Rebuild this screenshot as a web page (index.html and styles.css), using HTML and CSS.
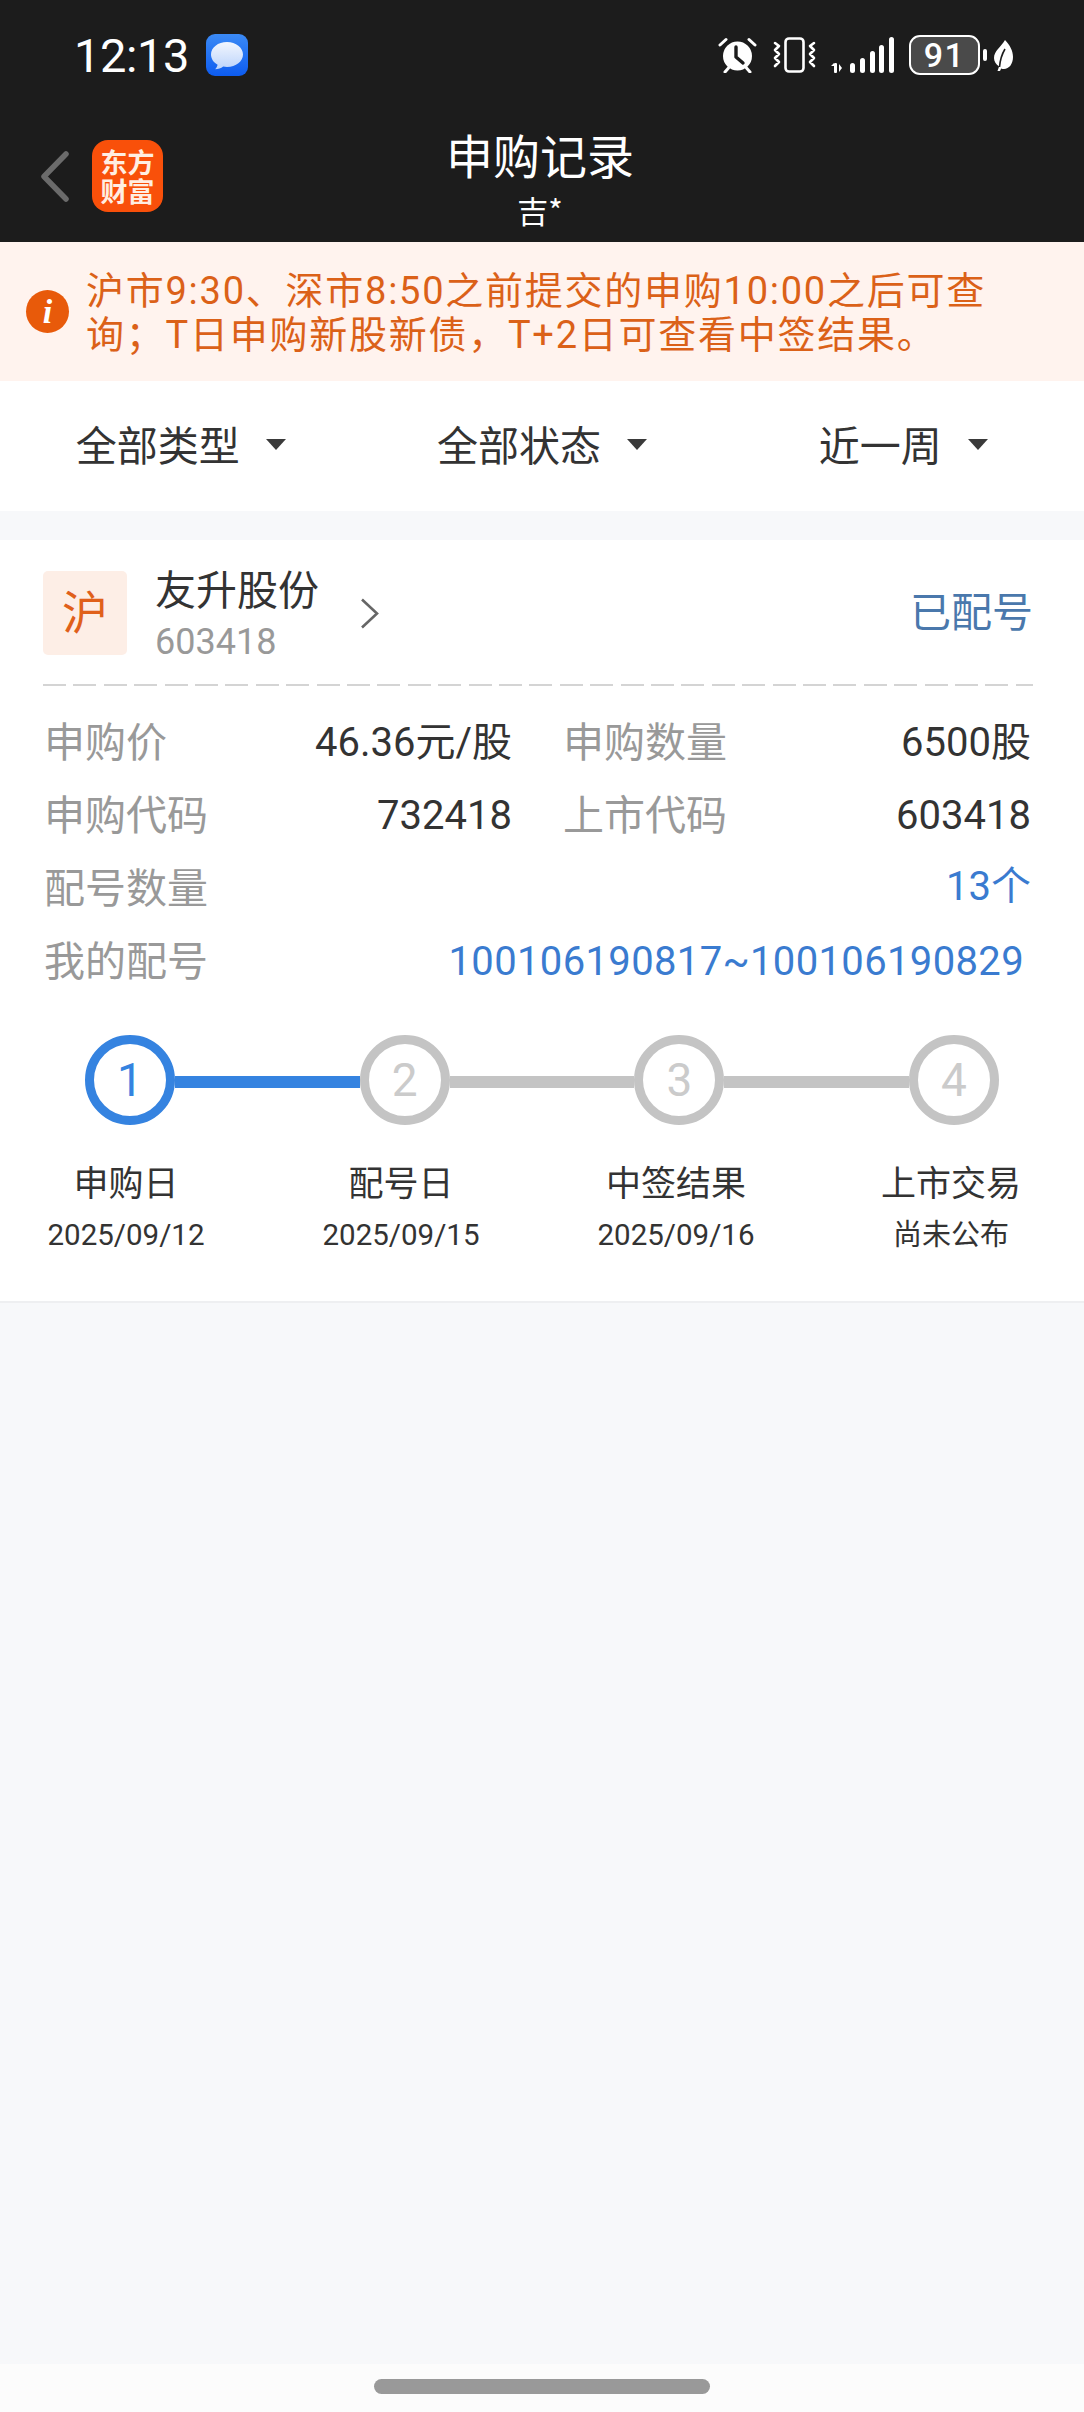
FILE: index.html
```html
<!DOCTYPE html>
<html lang="zh-CN">
<head>
<meta charset="utf-8">
<title>申购记录</title>
<link rel="stylesheet" href="styles.css">
</head>
<body>
<div class="page">
  <header class="topbar">
    <div class="status">
      <span class="clock">12:13</span>
      <svg class="msg" viewBox="0 0 42 42" width="42" height="42">
        <defs><linearGradient id="mg" x1="0" y1="0" x2="0" y2="1"><stop offset="0" stop-color="#3b8af5"/><stop offset="1" stop-color="#0d5cf0"/></linearGradient>
        <linearGradient id="bb" x1="0" y1="0" x2="0" y2="1"><stop offset="0" stop-color="#f2f6fe"/><stop offset="1" stop-color="#bcd4fb"/></linearGradient></defs>
        <rect width="42" height="42" rx="9" fill="url(#mg)"/>
        <path d="M21 8C12 8 5 13.500 5 20.500c0 4.300 2.600 8 6.600 10.200-.4 1.700-1.300 3.300-2.400 4.500 3 0 5.800-1 8-2.700 1.200.3 2.500.4 3.800.4 9 0 16-5.500 16-12.400S30 8 21 8z" fill="url(#bb)"/>
      </svg>
      <div class="sys">
        <svg class="alarm" viewBox="0 0 39 36" width="39" height="36">
          <circle cx="19.500" cy="19" r="14.500" fill="#fff"/>
          <path d="M18 10v10l7 6" stroke="#1c1c1c" stroke-width="3.400" fill="none" stroke-linecap="round" stroke-linejoin="round"/>
          <path d="M2 8l6-5.500M37 8l-6-5.500M7 35l3.500-4M32 35l-3.500-4" stroke="#fff" stroke-width="3" stroke-linecap="round" fill="none"/>
        </svg>
        <svg viewBox="0 0 43 36" width="43" height="36">
          <rect x="12.500" y="1.500" width="18" height="33" rx="3.500" stroke="#fff" stroke-width="2.600" fill="none"/>
          <path d="M2 6l4 3-4 4 4 4-4 4 4 4-4 4M41 6l-4 3 4 4-4 4 4 4-4 4 4 4" stroke="#fff" stroke-width="2.600" fill="none" stroke-linecap="round" stroke-linejoin="round"/>
        </svg>
        <svg viewBox="0 0 63 36" width="63" height="36" fill="#fff">
          <rect x="3" y="26" width="3" height="10" rx="1"/>
          <path d="M0 29l3-3v3zM8 27l3 4-3 4z"/>
          <rect x="19" y="26" width="5" height="10" rx="2.500"/>
          <rect x="29" y="21" width="5" height="15" rx="2.500"/>
          <rect x="39" y="14" width="5" height="22" rx="2.500"/>
          <rect x="48" y="8" width="5" height="28" rx="2.500"/>
          <rect x="58" y="0" width="5" height="36" rx="2.500"/>
        </svg>
        <div class="battery-group">
          <div class="battery"><span class="battery-level">91</span></div>
          <span class="battery-tip"></span>
          <svg class="leaf" viewBox="0 0 19 31" width="19" height="31">
            <path d="M11 0c5 5 8 11 8 17 0 7-4 12-9 12-1 0-2-.2-2.800-.6L6 31H3.500l1.600-4.500C2 24.500 0 21.500 0 18 0 11 7 7 11 0z" fill="#fff"/>
            <path d="M11 9C8 14 6 21 5.500 27" stroke="#1c1c1c" stroke-width="1.600" fill="none"/>
          </svg>
        </div>
      </div>
    </div>
    <nav class="nav">
      <div class="nav-left">
        <svg class="back" viewBox="0 0 29 51" width="29" height="51"><path d="M26 3L4 25.500 26 48" stroke="#6b6b6b" stroke-width="5.500" fill="none" stroke-linecap="round" stroke-linejoin="round"/></svg>
        <div class="logo"><span class="logo-text">东方财富</span></div>
      </div>
      <div class="nav-title">
        <div class="title">申购记录</div>
        <div class="subtitle">吉*</div>
      </div>
    </nav>
  </header>

  <section class="notice">
    <span class="notice-icon">i</span>
    <p class="notice-text">沪市9:30、深市8:50之前提交的申购10:00之后可查询；T日申购新股新债，T+2日可查看中签结果。</p>
  </section>

  <section class="filters">
    <div class="filter"><span>全部类型</span><i class="caret"></i></div>
    <div class="filter"><span>全部状态</span><i class="caret"></i></div>
    <div class="filter"><span>近一周</span><i class="caret"></i></div>
  </section>

  <main class="content">
    <article class="card">
      <div class="card-head">
        <div class="market">沪</div>
        <div class="stock">
          <div class="stock-name">友升股份</div>
          <div class="stock-code">603418</div>
        </div>
        <svg class="more" viewBox="0 0 19 31" width="19" height="31"><path d="M2 1.500L17 15.500 2 29.500" stroke="#666" stroke-width="2.600" fill="none"/></svg>
        <div class="state">已配号</div>
      </div>
      <div class="dash"></div>
      <div class="info">
        <div class="info-pair"><span class="label">申购价</span><span class="value">46.36元/股</span></div>
        <div class="info-pair"><span class="label">申购数量</span><span class="value">6500股</span></div>
        <div class="info-pair"><span class="label">申购代码</span><span class="value">732418</span></div>
        <div class="info-pair"><span class="label">上市代码</span><span class="value">603418</span></div>
        <div class="info-pair wide"><span class="label">配号数量</span><span class="value link lift">13个</span></div>
        <div class="info-pair wide"><span class="label">我的配号</span><span class="value link inset">100106190817~100106190829</span></div>
      </div>
      <div class="track">
        <span class="node active">1</span><span class="bar active"></span>
        <span class="node">2</span><span class="bar"></span>
        <span class="node">3</span><span class="bar"></span>
        <span class="node">4</span>
      </div>
      <div class="steps">
        <div class="step"><div class="step-name">申购日</div><div class="step-date">2025/09/12</div></div>
        <div class="step"><div class="step-name">配号日</div><div class="step-date">2025/09/15</div></div>
        <div class="step"><div class="step-name">中签结果</div><div class="step-date">2025/09/16</div></div>
        <div class="step"><div class="step-name">上市交易</div><div class="step-date small">尚未公布</div></div>
      </div>
    </article>
  </main>

  <footer class="home"><span class="home-bar"></span></footer>
</div>
</body>
</html>
```

FILE: styles.css
```css
* { box-sizing: border-box; }
html, body { margin: 0; padding: 0; }
body {
  font-family: Roboto, "Noto Sans CJK SC", sans-serif;
  background: #f7f8fa;
  color: #333;
}
.page {
  width: 1084px;
  height: 2412px;
  display: flex;
  flex-direction: column;
  overflow: hidden;
}

/* top bar */
.topbar { background: #1c1c1c; height: 242px; color: #fff; flex: none; }
.status {
  height: 110px;
  display: flex;
  align-items: center;
  padding: 0 71px 0 74px;
}
.clock { font-size: 47px; letter-spacing: -.4px; line-height: 1; }
.msg { margin-left: 17px; }
.sys { margin-left: auto; display: flex; align-items: center; gap: 15px; }
.alarm { margin-right: 1px; }
.battery-group { display: flex; align-items: center; margin-left: 0; }
.battery {
  width: 71px;
  height: 40px;
  border: 2.5px solid #fff;
  border-radius: 11px;
  background: #4a4a4a;
  background-clip: padding-box;
  display: flex;
  align-items: center;
  justify-content: center;
}
.battery-level { font-size: 34px; font-weight: 500; line-height: 1; letter-spacing: 1.5px; }
.battery-tip { width: 4px; height: 12px; background: #fff; border-radius: 2px; margin-left: 3px; }
.leaf { margin-left: 7px; }

.nav {
  height: 132px;
  position: relative;
  display: flex;
  justify-content: center;
  padding-right: 4px;
}
.nav-left {
  position: absolute;
  left: 40px;
  top: 30px;
  display: flex;
  align-items: center;
  gap: 23px;
}
.logo {
  width: 71px;
  height: 72px;
  background: #f9500a;
  border-radius: 16px;
  display: flex;
  align-items: center;
  justify-content: center;
  font-family: "Noto Sans CJK SC", sans-serif;
  font-size: 27px;
  font-weight: 700;
  line-height: 29px;
  color: #ffeee2;
  text-align: center;
}
.logo-text { width: 54px; }
.nav-title { text-align: center; font-family: "Noto Sans CJK SC", sans-serif; padding-top: 14px; }
.title { font-size: 47px; line-height: 60px; font-weight: 400; }
.subtitle { font-size: 31px; line-height: 40px; margin-top: 6px; }

/* notice */
.notice {
  height: 139px;
  flex: none;
  background: #fff3ee;
  display: flex;
  align-items: center;
  padding-left: 26px;
  color: #db6118;
}
.notice-icon {
  width: 43px;
  height: 43px;
  border-radius: 50%;
  background: #e85a0a;
  color: #fff;
  font-family: "Liberation Serif", serif;
  font-style: italic;
  font-weight: 700;
  font-size: 34px;
  line-height: 43px;
  text-align: center;
  flex: none;
}
.notice-text {
  margin: 2px 0 0 17px;
  width: 920px;
  font-size: 38px;
  line-height: 44px;
  letter-spacing: 1.75px;
}

/* filters */
.filters {
  height: 130px;
  flex: none;
  background: #fff;
  display: grid;
  grid-template-columns: repeat(3, 1fr);
}
.filter {
  display: flex;
  align-items: center;
  justify-content: center;
  gap: 26px;
  font-size: 41px;
  line-height: 1;
  color: #333;
  padding-top: 2px;
}
.caret {
  width: 0;
  height: 0;
  border-left: 10.500px solid transparent;
  border-right: 10.500px solid transparent;
  border-top: 11px solid #3a3a3a;
  margin-top: -6px;
}

/* card */
.content { flex: 1; padding-top: 29px; }
.card {
  background: #fff;
  height: 763px;
  border-bottom: 2px solid #eeeff1;
  padding: 31px 51px 0 43px;
}
.card-head { display: flex; align-items: center; height: 84px; }
.market {
  width: 84px;
  height: 84px;
  border-radius: 5px;
  background: #fdeee6;
  color: #e0601a;
  font-size: 46px;
  line-height: 84px;
  text-align: center;
  flex: none;
}
.stock { margin-left: 28px; padding-top: 8px; }
.stock-name { font-size: 41px; line-height: 50px; color: #333; margin-top: -6px; }
.stock-code { font-size: 36px; line-height: 40px; color: #999; margin-top: 6px; }
.more { margin-left: 41px; }
.state { margin-left: auto; font-size: 41px; line-height: 1; color: #4a78ac; }
.dash {
  height: 2px;
  margin: 29px 0 20px;
  background: repeating-linear-gradient(90deg, #d4d4d4 0 23px, transparent 23px 30.400px);
}
.info {
  display: grid;
  grid-template-columns: 469px 469px;
  column-gap: 50px;
  row-gap: 1px;
  margin-right: -2px;
}
.info-pair {
  height: 72px;
  display: flex;
  align-items: center;
  justify-content: space-between;
  font-size: 41px;
  line-height: 1;
  padding: 2px 0 0 1px;
}
.info-pair.wide { grid-column: 1 / -1; padding-left: 1px; }
.value { font-size: 40px; color: #333; }
.label { color: #999; }
.link { color: #3a7bd0; }
.lift { margin-top: -4px; }
.inset { margin-right: 7px; letter-spacing: .35px; }

/* progress */
.track {
  display: flex;
  align-items: center;
  margin: 38px 34px 0 42px;
}
.node {
  width: 90px;
  height: 90px;
  border-radius: 50%;
  border: 9px solid #c4c4c4;
  color: #cbcbcb;
  background: #fff;
  font-size: 46px;
  line-height: 72px;
  text-align: center;
  flex: none;
}
.node.active { border-color: #3583e0; color: #3583e0; }
.bar { flex: 1; height: 12px; margin-top: 4px; background: #c4c4c4; }
.bar.active { background: #3583e0; }
.steps {
  display: flex;
  justify-content: space-between;
  margin: 36px -8px 0 -7px;
}
.step { width: 180px; text-align: center; }
.step-name { font-size: 35px; line-height: 48px; color: #333; }
.step-date { font-size: 29.500px; line-height: 40px; color: #333; margin-top: 6px; }
.step-date.small { font-size: 29px; }

/* home indicator */
.home {
  height: 48px;
  flex: none;
  background: #fcfcfc;
  display: flex;
  justify-content: center;
  padding-top: 15px;
}
.home-bar { width: 336px; height: 15px; border-radius: 8px; background: #999; }
```
